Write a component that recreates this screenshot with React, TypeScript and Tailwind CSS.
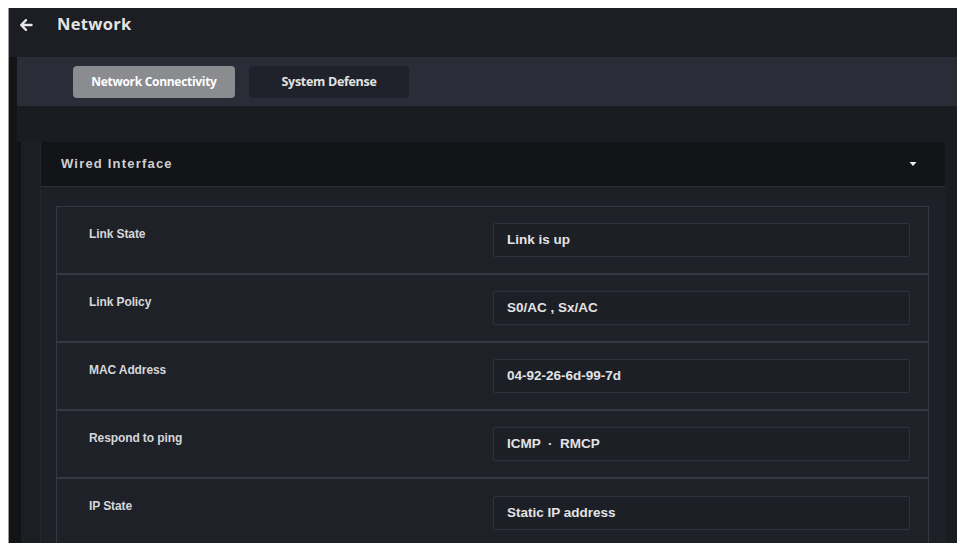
import React from "react";

const rows = [
  { label: "Link State", value: "Link is up" },
  { label: "Link Policy", value: "S0/AC , Sx/AC" },
  { label: "MAC Address", value: "04-92-26-6d-99-7d" },
  { label: "Respond to ping", value: "ICMP  ·  RMCP" },
  { label: "IP State", value: "Static IP address" },
];

export default function App() {
  return (
    <div className="w-[962px] h-[545px] bg-white overflow-hidden pt-[8px] pl-[8px] pr-[5px] pb-[2px] flex">
      <div className="flex-1 flex flex-col bg-[#16171b] overflow-hidden border-l border-[#9a9a9a]">
        {/* Header */}
        <div className="h-[49px] shrink-0 bg-[#1c1e23] flex items-center pl-[10px]">
          <svg width="14" height="14" viewBox="0 0 14 14" className="mt-[-16px]">
            <path d="M12.5 7H2.5M7 2.2L2.2 7L7 11.8" stroke="#e8e8e8" strokeWidth="2.4" fill="none" strokeLinecap="round" strokeLinejoin="round" />
          </svg>
          <span className="ml-[24px] mt-[-16px] text-[16.5px] font-bold text-[#e4e4e4] tracking-[0.3px] [font-family:'Open_Sans',sans-serif]">
            Network
          </span>
        </div>
        <div className="flex-1 flex">
          <div className="w-[8px] shrink-0 bg-[#131417]" />
          <div className="flex-1 flex flex-col">
            {/* Tabs bar */}
            <div className="h-[49px] shrink-0 bg-[#2a2d37] flex items-start pl-[56px] pt-[9px] gap-[14px] [font-family:'Open_Sans',sans-serif]">
              <div className="w-[162px] h-[32px] rounded-[4px] bg-[#8b8c90] flex items-center justify-center text-[12px] font-bold text-white tracking-[-0.3px]">
                Network Connectivity
              </div>
              <div className="w-[160px] h-[32px] rounded-[4px] bg-[#1f222a] flex items-center justify-center text-[12.5px] font-bold text-[#e2e2e2] tracking-[-0.3px]">
                System Defense
              </div>
            </div>
            {/* Content */}
            <div className="flex-1 flex bg-[#1a1c21] pt-[36px] pr-[12px]">
              <div className="w-[4px] shrink-0 bg-[#121316]" />
              <div className="w-[20px] shrink-0 bg-[#1c1e23] border-r border-[#24262c]" />
              <div className="flex-1 flex flex-col">
                <div className="h-[45px] shrink-0 bg-[#121418] flex items-center justify-between pl-[20px] pr-[28px] border-b border-[#2c2f37]">
                  <span className="text-[13px] font-bold text-[#cfd0d2] tracking-[1.2px] [font-family:'Liberation_Sans',sans-serif]">
                    Wired Interface
                  </span>
                  <svg width="8" height="6" viewBox="0 0 8 6">
                    <path d="M0.5 1L7.5 1L4 5Z" fill="#f0f0f0" />
                  </svg>
                </div>
                <div className="flex-1 bg-[#1e2027] pt-[19px] pl-[15px] pr-[16px]">
                  <div className="border border-[#353842] bg-[#1f2129] [font-family:'Liberation_Sans',sans-serif]">
                    {rows.map((r, i) => (
                      <div
                        key={r.label}
                        className={`h-[68px] flex items-center pr-[18px] ${i < rows.length - 1 ? "border-b-2 border-[#363943]" : ""}`}
                      >
                        <div className="w-[436px] shrink-0 self-start pt-[18px] pl-[32px] text-[12px] font-bold text-[#d6d7d9] tracking-[-0.1px]">
                          {r.label}
                        </div>
                        <div className="flex-1 h-[34px] border border-[#30333c] bg-[#1d1f26] rounded-[2px] flex items-center pl-[13px] text-[13.5px] font-bold text-[#e2e3e5] whitespace-pre">
                          {r.value}
                        </div>
                      </div>
                    ))}
                  </div>
                </div>
              </div>
            </div>
          </div>
        </div>
      </div>
    </div>
  );
}
